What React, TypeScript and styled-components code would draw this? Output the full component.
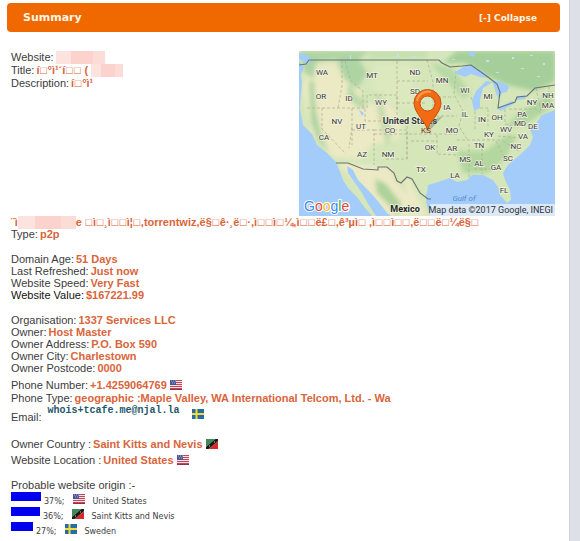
import React, { useState } from 'react';
import styled, { createGlobalStyle } from 'styled-components';

const GlobalStyle = createGlobalStyle`
  * { box-sizing: border-box; }
  body {
    margin: 0;
    background: #fff;
    font-family: 'Liberation Sans', Arial, sans-serif;
    font-size: 11px;
    line-height: 12px;
    color: #3c3c3c;
  }
`;

const Page = styled.div`
  display: flex;
  min-height: 100vh;
`;

const Main = styled.main`
  flex: 1;
  min-width: 0;
  padding: 3px 9px 0 7px;
`;

const Gutter = styled.aside`
  flex: 0 0 11px;
  background: #dde1e7;
  border-left: 1px solid #cfd3d8;
`;

const Header = styled.header`
  display: flex;
  align-items: center;
  justify-content: space-between;
  height: 29px;
  padding: 0 23px 0 16px;
  border-radius: 4px;
  background: #f06800;
  color: #fff6e6;
  font-family: 'DejaVu Sans', Verdana, sans-serif;
`;

const Heading = styled.h1`
  margin: 0;
  font-size: 11px;
  font-weight: bold;
`;

const CollapseButton = styled.button`
  padding: 0;
  border: 0;
  background: none;
  color: inherit;
  font-family: inherit;
  font-size: 9px;
  font-weight: bold;
  cursor: pointer;
`;

const Content = styled.div`
  padding: 19px 5px 0 4px;
`;

const Top = styled.div`
  display: flex;
  justify-content: space-between;
`;

const Group = styled.dl<{ $gap?: number; $top?: number }>`
  display: flex;
  flex-direction: column;
  gap: ${(p) => p.$gap ?? 0}px;
  margin: ${(p) => p.$top ?? 13}px 0 0;
`;

const Row = styled.div<{ $dark?: boolean }>`
  display: flex;
  align-items: center;
  gap: 2px;
  white-space: nowrap;
  color: ${(p) => (p.$dark ? '#111' : 'inherit')};
`;

const Label = styled.dt<{ $low?: boolean }>`
  padding-top: ${(p) => (p.$low ? 6 : 0)}px;
`;

const Value = styled.dd`
  display: flex;
  align-items: center;
  gap: 3px;
  margin: 0;
  font-weight: bold;
  color: #d9653b;
`;

const Redacted = styled.span<{ $width: number }>`
  display: inline-block;
  width: ${(p) => p.$width}px;
  height: 13px;
  margin: -1px 0;
  vertical-align: bottom;
  background: linear-gradient(90deg, #fde3df 0 30%, #fbd3cc 30% 75%, #fbdcd7 75%);
`;

const Keywords = styled.p`
  margin: 0;
  font-weight: bold;
  white-space: nowrap;
  color: #d9653b;
`;

const Missing = styled.span`
  display: inline-block;
  width: 8px;
  font-weight: normal;
  text-align: center;
`;

const Email = styled.span`
  padding: 0 9px 6px 4px;
  font-family: 'Liberation Mono', monospace;
  font-size: 10px;
  font-weight: bold;
  color: #24566a;
`;

const Flag = styled.svg`
  display: block;
  flex: none;
  width: 12px;
  height: 10px;
`;

const MapPicture = styled.svg`
  display: block;
  flex: none;
  width: 256px;
  height: 165px;
`;

const Origins = styled.section`
  margin-top: 13px;
`;

const OriginTitle = styled.h2`
  margin: 0;
  font-size: 11px;
  font-weight: normal;
`;

const OriginList = styled.ul`
  margin: 0;
  padding: 0;
  list-style: none;
  font-family: 'DejaVu Sans', Verdana, sans-serif;
  font-size: 8px;
`;

const OriginRow = styled.li`
  display: flex;
  align-items: center;
  gap: 7px;
  height: 15px;
`;

const Percent = styled.span`
  padding: 7px 2px 0 0;
  margin-left: -4px;
`;

const Country = styled.span`
  padding-top: 7px;
`;

const Bar = styled.span`
  height: 9px;
  margin-bottom: 5px;
  background: #0000ee;
`;

type FlagName = 'us' | 'kn' | 'se';

function CountryFlag({ name }: { name: FlagName }) {
  if (name === 'us') {
    return (
      <Flag viewBox="0 0 12 10" role="img" aria-label="United States flag">
        <rect width="12" height="10" fill="#f3e3e6" />
        {[0, 2, 4, 6, 8].map((y) => (
          <rect key={y} y={y} width="12" height="1" fill="#c54658" />
        ))}
        <rect width="6" height="5" fill="#4a5596" />
        <path d="M1 1h1M3 1h1M5 1h1M2 3h1M4 3h1" stroke="#aeb5da" />
        <path d="M0 9.5H12" stroke="#8d3546" />
      </Flag>
    );
  }
  if (name === 'kn') {
    return (
      <Flag viewBox="0 0 12 10" role="img" aria-label="Saint Kitts and Nevis flag">
        <rect width="12" height="10" fill="#d9282b" />
        <path d="M0 0H12L0 10Z" fill="#3d8b5c" />
        <path d="M0 7.500L9 0H12V2.500L3 10H0Z" fill="#b99a63" />
        <path d="M0 8L9.500 0H12V2L2.500 10H0Z" fill="#17191a" />
        <path d="M3 7h1M8 3h1" stroke="#ccc" />
      </Flag>
    );
  }
  return (
    <Flag viewBox="0 0 12 10" role="img" aria-label="Sweden flag">
      <rect width="12" height="10" fill="#276ba8" />
      <path d="M4.500 0V10M0 5H12" stroke="#f2dc3c" strokeWidth="2" />
    </Flag>
  );
}

const stateLabels: [string, number, number][] = [
  ['WA', 23, 21], ['MT', 73, 24], ['ND', 116, 21], ['OR', 22, 45], ['ID', 50, 47],
  ['WY', 82, 51], ['SD', 116, 40], ['NV', 38, 70], ['UT', 62, 75], ['CO', 91, 79],
  ['MN', 143, 29], ['WI', 166, 39], ['MI', 189, 45], ['IA', 148, 56],
  ['IL', 166, 63], ['IN', 183, 68], ['OH', 198, 66], ['NY', 233, 51], ['NH', 249, 44],
  ['MA', 249, 54], ['PA', 223, 63], ['MD', 221, 72], ['DE', 234, 75], ['WV', 207, 78],
  ['MO', 153, 79], ['KY', 190, 83], ['VA', 224, 85], ['OK', 131, 96], ['AR', 153, 97],
  ['TN', 180, 94], ['NC', 217, 95], ['MS', 166, 108], ['AL', 180, 112], ['SC', 209, 107],
  ['GA', 197, 116], ['LA', 156, 124], ['FL', 205, 139], ['CA', 25, 86], ['AZ', 63, 103],
  ['NM', 89, 103], ['TX', 122, 118],
];

const logoLetters: [string, string][] = [
  ['G', '#4285f4'], ['o', '#ea4335'], ['o', '#fbbc05'], ['g', '#4285f4'], ['l', '#34a853'], ['e', '#ea4335'],
];

function LocationMap() {
  return (
    <MapPicture viewBox="0 0 256 165" role="img" aria-label="Map of the United States">
      <defs>
        <filter id="terrain" x="-10%" y="-10%" width="120%" height="120%">
          <feGaussianBlur stdDeviation="2" />
        </filter>
        <clipPath id="frame"><rect width="256" height="165" /></clipPath>
      </defs>
      <g clipPath="url(#frame)" fontFamily="Roboto, Liberation Sans, sans-serif">
        <rect width="256" height="165" fill="#d5e6b9" />
        <g filter="url(#terrain)">
          <path d="M8 16L36 12L44 28L60 36L64 54L90 52L104 70L100 88L72 94L62 108L34 106L12 80L4 40Z" fill="#ece9c5" />
          <path d="M74 12L112 12L118 54L104 60L72 38Z" fill="#dce8bd" />
          <path d="M38 112L86 116L110 128L128 165H92L62 136Z" fill="#ece9c5" />
          <path d="M0 0H70L60 8L68 22L58 38L46 28L38 8L18 10L14 28L6 22Z" fill="#aed4a4" />
          <path d="M10 30L15 30L17 60L22 82L29 100L20 90L12 72Z" fill="#add4a0" />
          <path d="M158 0H256V30L236 40L208 34L190 26L166 12L144 12Z" fill="#a5cf9a" />
          <path d="M132 12L154 18L172 42L164 48L138 20Z" fill="#b7d9a5" />
          <path d="M158 100L186 100L208 84L218 84L206 108L188 122L164 122Z" fill="#b3d79f" />
          <path d="M206 76L218 64L242 48L254 40L252 56L226 74Z" fill="#b1d59f" />
          <path d="M76 44L82 43L86 62L94 82L88 96L82 78Z" fill="#c6dcae" />
          <path d="M76 128L86 132L102 152L98 165L90 154L78 142Z" fill="#add29a" />
          <path d="M90 116L106 128L108 144L96 130Z" fill="#d8e4b8" />
          <path d="M50 30L57 44L68 52L61 58L48 46Z" fill="#b8d9a8" />
          <path d="M70 0H128V7H70Z" fill="#c4dfb0" />
        </g>
        <g stroke="#a9ae94" strokeWidth="0.7" strokeDasharray="3 2" fill="none">
          <path d="M8 57H68V44H98V70H66V57M23 57V78L47 103M53 57V94M53 76L50 97M53 79H75V114M75 79H108V108H85M98 70H108V108M98 10V58M98 30H129M98 52H126M43 9V35L39 57M46 10L52 30L64 40V57" />
          <path d="M128 9L134 31V65H158M134 46H155M157 20L155 43L164 60L160 75L169 90M172 46L176 57V78M189 57H178M189 58V75M75 83H158M138 84V103L158 104M112 90H138M158 89H204M170 93V127M183 92V123M197 90L206 108M204 90L221 101M175 118H204M199 85L230 88M206 58V73L216 76M210 58H237L243 63M237 37L242 60M250 35V59" />
        </g>
        <g fill="#a4ccfa">
          <path d="M0 10L5 16L2 24L3 31L2 44L1 57L4 74L13 83L18 94L28 102L37 111L41 121L44 129L49 137L58 146L66 157L73 165H0Z" />
          <path d="M48 115L54 119L59 129L69 139L78 149L88 162L92 165H77L73 159L68 151L63 142L56 132L49 122Z" />
          <path d="M131 165L127 151L129 134L139 131L151 127L158 131L168 129L173 124L184 124L194 129L199 136L201 144L208 152L212 149L211 139L206 129L204 122L209 114L223 102L231 94L234 86L231 79L236 74L243 64L251 61L256 59V165Z" />
          <path d="M155 22L164 16L172 14L183 20L191 27L181 26L172 23L166 26Z" />
          <path d="M175 60L173 49L177 40L187 30L194 31L184 37L181 49L181 57Z" />
          <path d="M193 29L202 31L210 35L208 41L203 42L200 48L197 42Z" />
          <path d="M198 57L213 50L216 52L202 60ZM217 46L228 44L226 48L217 49Z" />
          <path d="M60 59L65 62L63 65ZM0 2L8 4L12 8L10 14L6 11L0 8ZM171 0L177 2L174 6L169 4ZM126 146L130 137L131 148Z" />
        </g>
        <g fill="#c9dff0">
          <path d="M136 4h3v1h-3ZM143 3h2v2h-2ZM153 8h3v1h-3ZM187 9h3v2h-3ZM197 21h3v1h-3ZM213 6h2v2h-2ZM231 4h3v1h-3ZM222 17h3v1h-3ZM244 12h2v2h-2ZM238 25h3v1h-3ZM98 3h2v3h-2ZM114 5h3v1h-3ZM51 4h1v5h-1ZM65 28h1v4h-1Z" />
        </g>
        <g fill="none" stroke="#69756e" strokeWidth="1.1">
          <path d="M0 14L7 13L10 9H140L143 12L151 16L163 15L172 14L189 26L198 33L201 41L199 57L216 51L218 46L228 45L236 37L243 36L256 34" />
          <path d="M37 112L49 112L64 118L79 119V116H88L95 122L98 130L102 132L108 126L113 128L121 142L129 148L132 148" />
        </g>
        <g fontSize="8" fill="#343a3a" stroke="#f2f3df" strokeWidth="1.4" paintOrder="stroke" textAnchor="middle">
          {stateLabels.map(([name, x, y]) => (
            <text key={name} x={x} y={y + 3}>{name}</text>
          ))}
          <text x="111" y="73" fontSize="9" fontWeight="bold" fill="#30383b">United States</text>
          <text x="106" y="161" fontSize="9" fontWeight="bold" fill="#202526">Mexico</text>
        </g>
        <text x="165" y="150" fontSize="8" fontStyle="italic" textAnchor="middle" fill="#4f8dce">Gulf of</text>
        <path d="M126 80L133 77L144 65L138 67Z" fill="#53634a" opacity="0.35" />
        <path fillRule="evenodd" d="M128.500 79C127 71 115 62 115 52A13.500 13.500 0 0 1 142 52C142 62 130 71 128.500 79ZM128.500 45A7.500 7.500 0 1 0 128.500 60A7.500 7.500 0 1 0 128.500 45Z" fill="#f26a14" stroke="#c94d0c" />
        <path d="M118 50A11 11 0 0 1 132 41" fill="none" stroke="#ff9a51" strokeWidth="2" />
        <text x="127" y="82" fontSize="8" textAnchor="middle" fill="#7d2d14">KS</text>
        <text x="5" y="160" fontSize="14" fontFamily="Liberation Sans, sans-serif" stroke="#fff" strokeWidth="2" paintOrder="stroke">
          {logoLetters.map(([letter, color], i) => (
            <tspan key={i} fill={color}>{letter}</tspan>
          ))}
        </text>
        <rect x="131" y="153" width="125" height="12" fill="#edf3f7" opacity="0.75" />
        <text x="254" y="162" fontSize="9" textAnchor="end" fill="#333">Map data ©2017 Google, INEGI</text>
      </g>
    </MapPicture>
  );
}

function GlyphText({ text }: { text: string }) {
  return (
    <span>
      {text.split(/(□)/).map((part, i) => (part === '□' ? <Missing key={i}>{part}</Missing> : part))}
    </span>
  );
}

interface DetailProps {
  label: string;
  value?: string;
  flag?: FlagName;
  dark?: boolean;
  low?: boolean;
  children?: React.ReactNode;
}

function Detail({ label, value, flag, dark, low, children }: DetailProps) {
  return (
    <Row $dark={dark}>
      <Label $low={low}>{label}</Label>
      <Value>
        {value && <GlyphText text={value} />}
        {children}
        {flag && <CountryFlag name={flag} />}
      </Value>
    </Row>
  );
}

const origins: { percent: number; width: number; flag: FlagName; country: string }[] = [
  { percent: 37, width: 30, flag: 'us', country: 'United States' },
  { percent: 36, width: 29, flag: 'kn', country: 'Saint Kitts and Nevis' },
  { percent: 27, width: 22, flag: 'se', country: 'Sweden' },
];

export default function App() {
  const [open, setOpen] = useState(true);
  return (
    <Page>
      <GlobalStyle />
      <Main>
        <Header>
          <Heading>Summary</Heading>
          <CollapseButton type="button" aria-expanded={open} onClick={() => setOpen(!open)}>
            {open ? '[-] Collapse' : '[+] Expand'}
          </CollapseButton>
        </Header>
        {open && (
          <Content>
            <Top>
              <Group $top={0} $gap={1}>
                <Detail label="Website:"><Redacted $width={49} /></Detail>
                <Detail label="Title:" value="í□°ì¹´í□□ ("><Redacted $width={32} /></Detail>
                <Detail label="Description:" value="í□°ì¹" />
              </Group>
              <LocationMap />
            </Top>
            <Keywords>
              <GlyphText text="¨ì" />
              <Redacted $width={58} />
              <GlyphText text="e □ì□¸ì□□ì¦□,torrentwiz,ë§□ê·¸ë□·,ì□□ì□¼,ì□□ë£□,ê³µì□ ,ì□□ì□□,ë□□ë□¼ë§□" />
            </Keywords>
            <Group $top={0}>
              <Detail label="Type:" value="p2p" />
            </Group>
            <Group>
              <Detail label="Domain Age:" value="51 Days" />
              <Detail label="Last Refreshed:" value="Just now" />
              <Detail label="Website Speed:" value="Very Fast" />
              <Detail label="Website Value:" value="$167221.99" dark />
            </Group>
            <Group>
              <Detail label="Organisation:" value="1337 Services LLC" />
              <Detail label="Owner:" value="Host Master" />
              <Detail label="Owner Address:" value="P.O. Box 590" />
              <Detail label="Owner City:" value="Charlestown" />
              <Detail label="Owner Postcode:" value="0000" />
            </Group>
            <Group $top={5} $gap={1}>
              <Detail label="Phone Number:" value="+1.4259064769" flag="us" />
              <Detail label="Phone Type:" value="geographic :Maple Valley, WA International Telcom, Ltd. - Wa" />
              <Detail label="Email:" flag="se" low><Email>whois+tcafe.me@njal.la</Email></Detail>
            </Group>
            <Group $top={15} $gap={4}>
              <Detail label="Owner Country :" value="Saint Kitts and Nevis" flag="kn" />
              <Detail label="Website Location  :" value="United States" flag="us" />
            </Group>
            <Origins>
              <OriginTitle>Probable website origin :-</OriginTitle>
              <OriginList>
                {origins.map((o) => (
                  <OriginRow key={o.country}>
                    <Bar style={{ width: o.width }} />
                    <Percent>{o.percent}%;</Percent>
                    <CountryFlag name={o.flag} />
                    <Country>{o.country}</Country>
                  </OriginRow>
                ))}
              </OriginList>
            </Origins>
          </Content>
        )}
      </Main>
      <Gutter />
    </Page>
  );
}
